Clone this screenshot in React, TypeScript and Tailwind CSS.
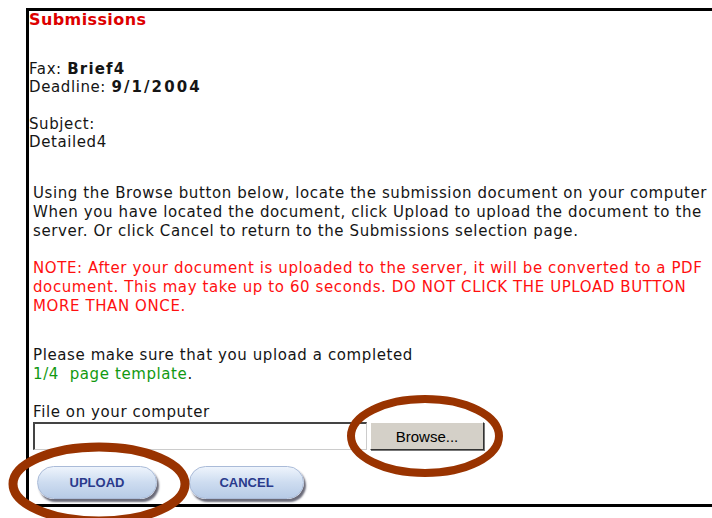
export default function App() {
  return (
    <div className="relative w-[712px] h-[518px] overflow-hidden bg-white" style={{ fontFamily: '"DejaVu Sans", Verdana, sans-serif' }}>
      <div className="ml-[26px] mt-[8px] w-[720px] h-[499px] border-l-[3px] border-t-[3px] border-b-[3px] border-black text-[15px] tracking-[0.6px] leading-[18px] text-[#151515]">
        <div className="pt-0 text-[16px] tracking-[0.4px] font-bold text-[#dd0000] leading-[18px]">Submissions</div>
        <div className="mt-[31px]">
          <div>Fax: <b className="tracking-[1.2px]">Brief4</b></div>
          <div>Deadline: <b className="tracking-[2.1px]">9/1/2004</b></div>
          <div className="mt-[19px]">Subject:</div>
          <div>Detailed4</div>
        </div>
        <div className="pl-[4px] mt-[33px] leading-[19px]">
          <p className="whitespace-nowrap">Using the Browse button below, locate the submission document on your computer<br />When you have located the document, click Upload to upload the document to the<br />server. Or click Cancel to return to the Submissions selection page.</p>
          <p className="mt-[18px] text-[#ff1010] whitespace-nowrap">NOTE: After your document is uploaded to the server, it will be converted to a PDF<br />document. This may take up to 60 seconds. DO NOT CLICK THE UPLOAD BUTTON<br />MORE THAN ONCE.</p>
          <p className="mt-[30px]">Please make sure that you upload a completed<br /><span className="text-[#119911]">1/4&nbsp; page template</span>.</p>
          <div className="mt-[19px]">File on your computer</div>
          <div className="flex items-center gap-[3px] mt-0">
            <div className="w-[334px] h-[28px] bg-white border-t-2 border-l-2 border-[#444] border-b border-r border-b-[#ccc] border-r-[#ccc]" />
            <div className="w-[114px] h-[28px] flex items-center justify-center bg-[#d4d0c8] border border-t-white border-l-white border-b-[#333] border-r-[#333] shadow-[1px_1px_0_#777] text-[15px] tracking-normal text-black" style={{ fontFamily: '"Liberation Sans", Arial, sans-serif' }}>Browse...</div>
          </div>
          <div className="flex gap-[32px] mt-[16px] pl-[4px]">
            <Pill label="UPLOAD" width="w-[120px]" />
            <Pill label="CANCEL" width="w-[115px]" />
          </div>
        </div>
      </div>
      <svg className="absolute left-0 top-0 pointer-events-none" width="712" height="518">
        <ellipse cx="425" cy="436" rx="74" ry="37" fill="none" stroke="#993300" strokeWidth="8" />
        <ellipse cx="99" cy="484" rx="86" ry="37" fill="none" stroke="#993300" strokeWidth="9" />
      </svg>
    </div>
  );
}

function Pill({ label, width }: { label: string; width: string }) {
  return (
    <div className={`${width} h-[33px] rounded-full flex items-center justify-center bg-gradient-to-b from-[#eef4fc] via-[#cddcf0] to-[#b7cbe6] border border-[#aabbd8] shadow-[2px_3px_2px_#6a6a78] text-[13px] tracking-normal font-bold text-[#2a3a8c]`} style={{ fontFamily: '"Liberation Sans", Arial, sans-serif' }}>
      {label}
    </div>
  );
}
